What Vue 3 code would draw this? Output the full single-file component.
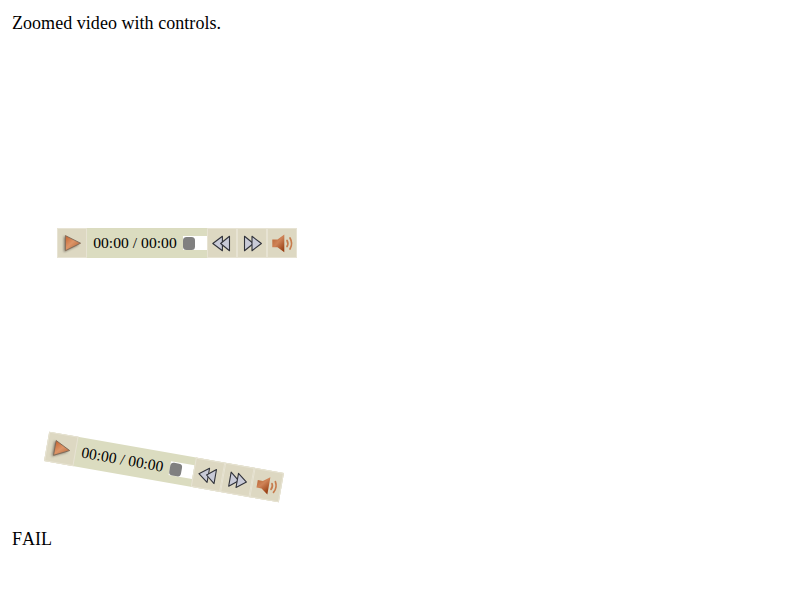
<script setup>
const players = [
  { id: 'flat', rotated: false },
  { id: 'tilted', rotated: true },
]
</script>

<template>
  <main class="page">
    <p class="title">Zoomed video with controls.</p>
    <div
      v-for="p in players"
      :key="p.id"
      class="controls"
      :class="{ rotated: p.rotated }"
    >
      <div class="button">
        <svg class="icon" viewBox="0 0 30 30">
          <defs>
            <linearGradient :id="p.id + '-play'" x1="0" y1="0" x2="1" y2="1">
              <stop offset="0" stop-color="#c4622f" />
              <stop offset="0.45" stop-color="#dd9568" />
              <stop offset="1" stop-color="#a8582c" />
            </linearGradient>
          </defs>
          <path class="shadow" d="M6.8 8V24.2L22 17Z" />
          <path d="M8.4 7.6V22.7L23.6 15.2Z" :fill="`url(#${p.id}-play)`" stroke="#7d6a59" stroke-width="0.9" />
        </svg>
      </div>
      <div class="time">00:00 / 00:00</div>
      <div class="slider"><div class="track"><div class="thumb"></div></div></div>
      <div class="button">
        <svg class="icon" viewBox="0 0 30 30">
          <g class="arrow">
            <path d="M15.4 8.3V22.7L5.8 15.5Z" />
            <path d="M22.5 8.3V22.7L13.6 15.5Z" />
          </g>
        </svg>
      </div>
      <div class="button">
        <svg class="icon" viewBox="0 0 30 30">
          <g class="arrow">
            <path d="M7.5 8.3V22.7L16.4 15.5Z" />
            <path d="M15 8.3V22.7L24.4 15.5Z" />
          </g>
        </svg>
      </div>
      <div class="button">
        <svg class="icon" viewBox="0 0 30 30">
          <defs>
            <linearGradient :id="p.id + '-sound'" x1="0" y1="0" x2="0.8" y2="1">
              <stop offset="0" stop-color="#b5602f" />
              <stop offset="0.5" stop-color="#cf8357" />
              <stop offset="1" stop-color="#983e12" />
            </linearGradient>
          </defs>
          <path d="M5.3 11.5H10.5L17.3 6.5V24.2L10.5 19.2H5.3Z" :fill="`url(#${p.id}-sound)`" />
          <path class="wave" d="M20 12.5Q21.8 15.5 20 18.5M23 10Q26.2 15.5 23 21" />
        </svg>
      </div>
    </div>
    <p class="result">FAIL</p>
  </main>
</template>

<style>
body {
  background: #fff;
}
</style>

<style scoped>
.page {
  box-sizing: border-box;
  height: 600px;
  padding: 12px;
  overflow: hidden;
  font-family: "Liberation Serif", serif;
  font-size: 18px;
  font-kerning: none;
  line-height: 22px;
  color: #000;
}
.title,
.result {
  margin: 0;
}
.title {
  letter-spacing: 0.04px;
}
.controls {
  display: flex;
  width: 240px;
  height: 30px;
  margin: 194px 0 0 45px;
  background: #dbdcc0;
}
.rotated {
  margin: 194px 0 0 32px;
  transform: rotate(10deg) scale(0.993);
}
.button {
  box-sizing: border-box;
  width: 30px;
  height: 30px;
  flex: none;
  background: #ddd8c2;
  border: 1px solid #e7e3d3;
}
.icon {
  display: block;
  width: 30px;
  height: 30px;
  margin: -1px;
}
.shadow {
  fill: #756d61;
  opacity: 0.8;
  filter: blur(1px);
}
.arrow {
  fill: #c8cad7;
  stroke: #30323a;
  stroke-width: 1.1;
  stroke-linejoin: round;
}
.wave {
  fill: none;
  stroke: #c77b4c;
  stroke-width: 1.7;
  stroke-linecap: round;
}
.time {
  width: 96px;
  flex: none;
  text-align: center;
  font-size: 15.6px;
  letter-spacing: 0.03px;
  line-height: 30px;
  white-space: nowrap;
}
.rotated .time {
  text-indent: -1px;
}
.slider {
  display: flex;
  width: 24px;
  align-items: center;
}
.track {
  display: flex;
  align-items: center;
  width: 24px;
  height: 14px;
  background: #fff;
}
.thumb {
  width: 12px;
  height: 13px;
  border-radius: 3.5px;
  background: #808080;
}
.result {
  margin-top: 46px;
}
</style>
